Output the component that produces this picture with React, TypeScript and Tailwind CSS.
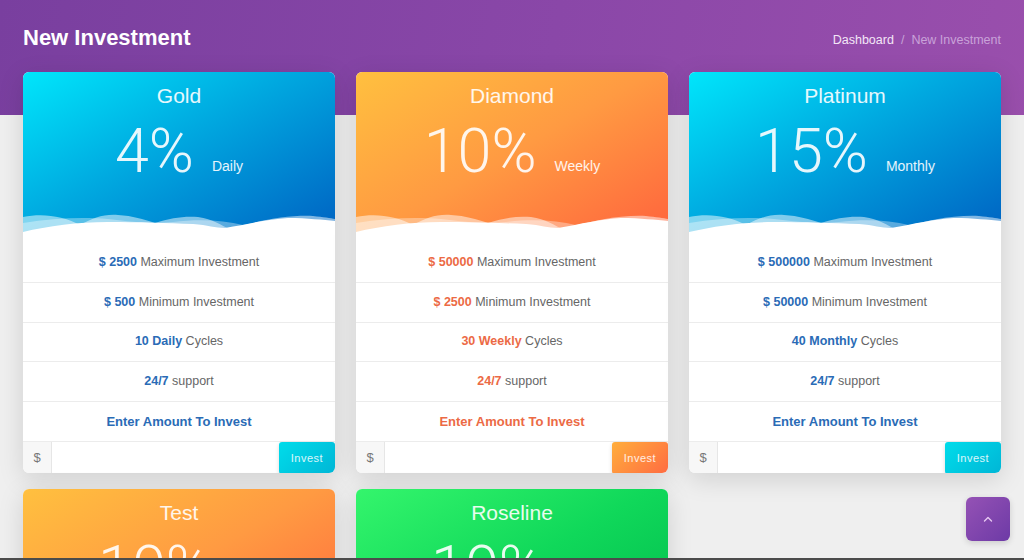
import React from "react";

type Plan = {
  name: string;
  pct: string;
  period: string;
  max: string;
  min: string;
  cycles: string;
  theme: "blue" | "orange" | "green";
};

const plans: Plan[] = [
  { name: "Gold", pct: "4%", period: "Daily", max: "$ 2500", min: "$ 500", cycles: "10 Daily", theme: "blue" },
  { name: "Diamond", pct: "10%", period: "Weekly", max: "$ 50000", min: "$ 2500", cycles: "30 Weekly", theme: "orange" },
  { name: "Platinum", pct: "15%", period: "Monthly", max: "$ 500000", min: "$ 50000", cycles: "40 Monthly", theme: "blue" },
  { name: "Test", pct: "10%", period: "Daily", max: "$ 100", min: "$ 10", cycles: "10 Daily", theme: "orange" },
  { name: "Roseline", pct: "10%", period: "Daily", max: "$ 100", min: "$ 10", cycles: "10 Daily", theme: "green" },
];

const headerBg: Record<Plan["theme"], string> = {
  blue: "bg-[linear-gradient(150deg,#00e6fb_0%,#00a9e0_45%,#0062c2_100%)]",
  orange: "bg-[linear-gradient(150deg,#ffc03f_0%,#ff9a42_50%,#ff643d_100%)]",
  green: "bg-[linear-gradient(150deg,#34f56c_0%,#10d85a_50%,#00b84c_100%)]",
};

const accent: Record<Plan["theme"], string> = {
  blue: "text-[#2a6bb6]",
  orange: "text-[#ec6a45]",
  green: "text-[#16a34a]",
};

const btnBg: Record<Plan["theme"], string> = {
  blue: "bg-[linear-gradient(135deg,#00dcea,#00b6d6)]",
  orange: "bg-[linear-gradient(135deg,#ffae3c,#ff6b42)]",
  green: "bg-[linear-gradient(135deg,#2ef06a,#00bb4e)]",
};

function Wave() {
  return (
    <svg
      className="block w-full h-[28px]"
      viewBox="0 0 312 28"
      preserveAspectRatio="none"
    >
      <path
        d="M0 10 C 20 6, 40 9, 57 18 C 70 11, 80 7, 95 8 C 110 9, 120 12, 132 16 C 148 11, 160 9, 175 10 C 190 12, 198 18, 208 23 C 235 13, 265 8, 290 9 C 300 10, 308 11, 312 12 L312 28 L0 28 Z"
        fill="#ffffff"
        fillOpacity="0.5"
      />
      <path
        d="M0 16 C 30 11, 60 10, 85 12 C 110 15, 130 17, 150 15 C 175 12, 200 13, 220 18 C 240 14, 260 12, 285 13 C 300 14, 308 15, 312 16 L312 28 L0 28 Z"
        fill="#ffffff"
        fillOpacity="0.35"
      />
      <path
        d="M0 25 C 25 19, 55 15, 85 15 C 115 15, 145 16, 170 17 C 185 18, 192 21, 202 21 C 225 17, 245 12, 265 11 C 285 11, 300 13, 312 14 L312 28 L0 28 Z"
        fill="#ffffff"
      />
    </svg>
  );
}

function Card({ p }: { p: Plan }) {
  const a = accent[p.theme];
  return (
    <div className="rounded-[6px] bg-white overflow-hidden shadow-[0_6px_26px_rgba(0,0,0,0.13)]">
      <div className={`relative h-[163px] flex flex-col items-center ${headerBg[p.theme]}`}>
        <div className="pt-[12px] h-[36px] leading-[24px] text-[21px] text-white/90 font-['Liberation_Sans',Arial,sans-serif]">
          {p.name}
        </div>
        <div className="mt-[12px] flex items-end text-white/90">
          <span className="text-[61px] leading-[62px] font-light font-['Roboto','Liberation_Sans',sans-serif]">
            {p.pct}
          </span>
          <span className="ml-[18px] mb-[7px] text-[14px] leading-[18px] font-['Liberation_Sans',Arial,sans-serif]">
            {p.period}
          </span>
        </div>
        <div className="absolute left-0 right-0 bottom-0">
          <Wave />
        </div>
      </div>
      <div className="text-[12.5px] text-[#666] font-['Liberation_Sans',Arial,sans-serif]">
        <div className="h-[48px] pt-[7px] flex items-center justify-center border-b border-[#ececec]">
          <span className={`font-bold ${a}`}>{p.max}</span>&nbsp;Maximum Investment
        </div>
        <div className="h-[39.5px] flex items-center justify-center border-b border-[#ececec]">
          <span className={`font-bold ${a}`}>{p.min}</span>&nbsp;Minimum Investment
        </div>
        <div className="h-[39.5px] flex items-center justify-center border-b border-[#ececec]">
          <span className={`font-bold ${a}`}>{p.cycles}</span>&nbsp;Cycles
        </div>
        <div className="h-[39.5px] flex items-center justify-center border-b border-[#ececec]">
          <span className={`font-bold ${a}`}>24/7</span>&nbsp;support
        </div>
        <div className={`h-[39.5px] flex items-center justify-center font-bold text-[13px] ${a}`}>
          Enter Amount To Invest
        </div>
        <div className="h-[32px] flex border-t border-[#ececec]">
          <div className="w-[29px] flex items-center justify-center bg-[#f7f7f7] border-r border-[#e6e6e6] text-[#777] text-[13px]">
            $
          </div>
          <div className="flex-1 bg-white" />
          <button
            className={`w-[56px] h-[32px] rounded-[3px] text-[11px] tracking-[0.5px] text-white/85 shadow-[0_2px_4px_rgba(0,0,0,0.15)] ${btnBg[p.theme]}`}
          >
            Invest
          </button>
        </div>
      </div>
    </div>
  );
}

export default function App() {
  return (
    <div className="relative w-[1024px] h-[560px] flex flex-col overflow-hidden font-['Liberation_Sans',Arial,sans-serif]">
      <div className="flex-1 overflow-hidden bg-[linear-gradient(180deg,transparent_115px,#efefef_115px),linear-gradient(100deg,#793f9f_0%,#8a47a8_50%,#9c50ad_100%)]">
        <div className="px-[23px] pt-[24px]">
          <div className="h-[28px] flex items-center justify-between">
            <h1 className="text-[22px] font-bold text-white leading-[28px]">New Investment</h1>
            <div className="text-[12.5px] flex items-center mt-[4px]">
              <span className="text-[#f3e6f7]">Dashboard</span>
              <span className="mx-[7px] text-[#c7a3d6]">/</span>
              <span className="text-[#c9a2d9]">New Investment</span>
            </div>
          </div>
          <div className="mt-[20px] grid grid-cols-3 gap-x-[21px] gap-y-[16px]">
            {plans.map((p) => (
              <Card key={p.name} p={p} />
            ))}
          </div>
        </div>
      </div>
      <div className="h-[2px] bg-[#4b4b4b]" />
      <button className="absolute right-[14px] bottom-[19px] w-[44px] h-[44px] rounded-[6px] flex items-center justify-center bg-[linear-gradient(135deg,#9552b5,#6d3aa6)] shadow-[0_2px_6px_rgba(0,0,0,0.15)]">
        <svg width="10" height="6" viewBox="0 0 10 6" fill="none">
          <path d="M1.5 5 L5 1.5 L8.5 5" stroke="#e6c8f2" strokeWidth="1.4" strokeLinecap="round" strokeLinejoin="round" />
        </svg>
      </button>
    </div>
  );
}
